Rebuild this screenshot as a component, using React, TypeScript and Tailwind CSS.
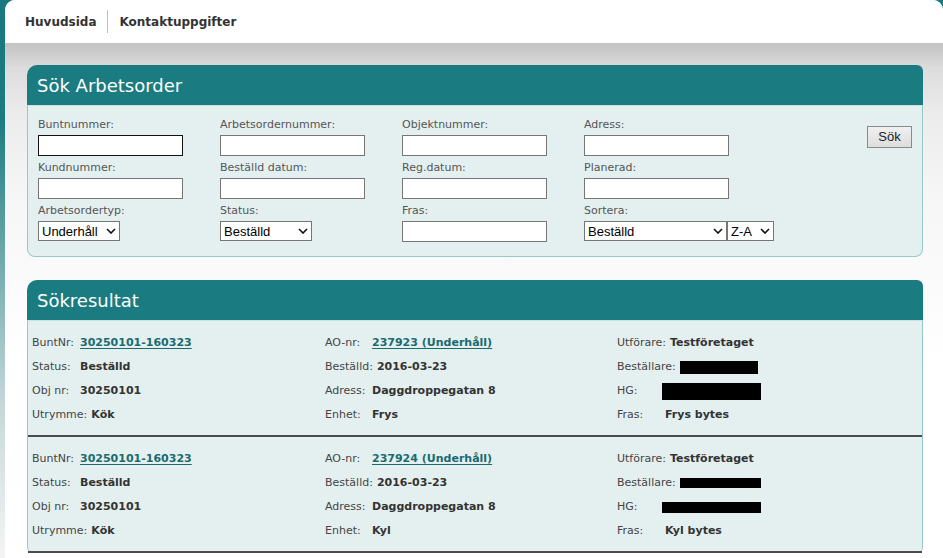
import React from "react";

const Chevron = () => (
  <svg width="10" height="6" viewBox="0 0 10 6" className="shrink-0">
    <path d="M1 1 L5 5 L9 1" fill="none" stroke="#111" strokeWidth="1.6" />
  </svg>
);

function Select({ value, w }: { value: string; w: string }) {
  return (
    <div
      className={`${w} shrink-0 h-[20px] bg-white border border-[#767676] flex items-center justify-between pl-[3px] pr-[3px] text-[13px] text-black`}
      style={{ fontFamily: '"Liberation Sans", Arial, sans-serif' }}
    >
      <span className="leading-none">{value}</span>
      <Chevron />
    </div>
  );
}

function Field({ label, children }: { label: string; children: React.ReactNode }) {
  return (
    <div className="flex flex-col">
      <div className="h-[17px] leading-[14px] text-[11px] text-[#555]">{label}</div>
      {children}
    </div>
  );
}

function Input({ dark }: { dark?: boolean }) {
  return (
    <div
      className={`w-[145px] h-[21px] bg-white border ${dark ? "border-[#111]" : "border-[#767676]"}`}
    />
  );
}

function Row({ label, children, min = "min-w-[44px]" }: { label: string; children: React.ReactNode; min?: string }) {
  return (
    <div className="h-[24px] flex items-center whitespace-nowrap">
      <span className={`inline-block ${min} text-[#444]`}>{label}</span>
      <span className="inline-block w-[4px]" />
      <span className="font-bold text-[#333] flex items-center">{children}</span>
    </div>
  );
}

function Redact({ w, h, ml = "" }: { w: string; h: string; ml?: string }) {
  return <span className={`inline-block bg-black ${w} ${h} ${ml}`} />;
}

type Item = {
  ao: string;
  enhet: string;
  fras: string;
  b: [string, string];
  hg: [string, string];
};

const items: Item[] = [
  { ao: "237923 (Underhåll)", enhet: "Frys", fras: "Frys bytes", b: ["w-[78px]", "h-[13px]"], hg: ["w-[99px]", "h-[17px]"] },
  { ao: "237924 (Underhåll)", enhet: "Kyl", fras: "Kyl bytes", b: ["w-[81px]", "h-[10px]"], hg: ["w-[99px]", "h-[11px]"] },
];

function ResultItem({ it }: { it: Item }) {
  return (
    <div className="pl-[4px] pt-[10px] pb-[8px] border-b-2 border-[#4a4a4a] grid grid-cols-[293px_292px_1fr] text-[11px]">
      <div className="flex flex-col">
        <Row label="BuntNr:">
          <a className="text-[#1a6b70] underline underline-offset-2">30250101-160323</a>
        </Row>
        <Row label="Status:">Beställd</Row>
        <Row label="Obj nr:">30250101</Row>
        <Row label="Utrymme:">Kök</Row>
      </div>
      <div className="flex flex-col">
        <Row label="AO-nr:" min="min-w-[43px]">
          <a className="text-[#1a6b70] underline underline-offset-2">{it.ao}</a>
        </Row>
        <Row label="Beställd:" min="min-w-[43px]">2016-03-23</Row>
        <Row label="Adress:" min="min-w-[43px]">Daggdroppegatan 8</Row>
        <Row label="Enhet:" min="min-w-[43px]">{it.enhet}</Row>
      </div>
      <div className="flex flex-col">
        <Row label="Utförare:">Testföretaget</Row>
        <Row label="Beställare:">
          <Redact w={it.b[0]} h={it.b[1]} />
        </Row>
        <Row label="HG:">
          <Redact w={it.hg[0]} h={it.hg[1]} ml="ml-[-3px]" />
        </Row>
        <Row label="Fras:">{it.fras}</Row>
      </div>
    </div>
  );
}

export default function App() {
  return (
    <div
      className="min-h-screen w-full bg-[linear-gradient(to_bottom,#17797e_0px,#1b7c80_120px,#c4d7d8_400px,#f4f4f4_558px)]"
      style={{ fontFamily: '"DejaVu Sans", Verdana, sans-serif' }}
    >
      <div className="ml-[5px] min-h-screen rounded-tl-[10px] rounded-tr-[10px] overflow-hidden bg-white">
        <div className="h-[43px] bg-white flex items-center pl-[20px] text-[12px] font-bold text-[#333]">
          <span>Huvudsida</span>
          <span className="mx-[11px] w-px h-[23px] bg-[#bdbdbd]" />
          <span>Kontaktuppgifter</span>
        </div>
        <div className="bg-[linear-gradient(to_bottom,#c2c2c2_0px,#dcdcdc_25px,#ececec_70px,#f6f6f6_150px,#ffffff_320px)] pt-[22px] pl-[22px] pr-[20px] pb-[10px]">
          {/* Search panel */}
          <div className="w-[896px]">
            <div className="h-[40px] bg-[#1a7b80] rounded-tl-[10px] rounded-tr-[6px] flex items-center pl-[10px] text-[18px] text-white">
              Sök Arbetsorder
            </div>
            <div className="h-[152px] bg-[#e4f0f0] border border-[#96c8ca] border-t-[#c9e1e1] rounded-b-[8px] pl-[10px] pt-[12px] pr-[10px] flex items-start">
              <div className="grid grid-cols-[182px_182px_182px_182px] content-start gap-y-[5px]">
                <Field label="Buntnummer:"><Input dark /></Field>
                <Field label="Arbetsordernummer:"><Input /></Field>
                <Field label="Objektnummer:"><Input /></Field>
                <Field label="Adress:"><Input /></Field>
                <Field label="Kundnummer:"><Input /></Field>
                <Field label="Beställd datum:"><Input /></Field>
                <Field label="Reg.datum:"><Input /></Field>
                <Field label="Planerad:"><Input /></Field>
                <Field label="Arbetsordertyp:"><Select value="Underhåll" w="w-[82px]" /></Field>
                <Field label="Status:"><Select value="Beställd" w="w-[92px]" /></Field>
                <Field label="Fras:"><Input /></Field>
                <Field label="Sortera:">
                  <div className="flex">
                    <Select value="Beställd" w="w-[143px]" />
                    <Select value="Z-A" w="w-[47px]" />
                  </div>
                </Field>
              </div>
              <div className="ml-auto pt-[8px]">
                <div
                  className="w-[45px] h-[22px] border border-[#8a8a8a] bg-[linear-gradient(to_bottom,#f0f0f0,#dddddd)] flex items-center justify-center text-[13px] text-[#222]"
                  style={{ fontFamily: '"Liberation Sans", Arial, sans-serif' }}
                >
                  Sök
                </div>
              </div>
            </div>
          </div>

          {/* Results panel */}
          <div className="w-[896px] mt-[23px]">
            <div className="h-[40px] bg-[#1a7b80] rounded-tl-[10px] rounded-tr-[6px] flex items-center pl-[10px] text-[18px] text-white">
              Sökresultat
            </div>
            <div className="bg-[#e4f0f0] border-x border-t border-[#96c8ca] border-t-[#c9e1e1] rounded-b-[6px]">
              {items.map((it, i) => (
                <ResultItem key={i} it={it} />
              ))}
            </div>
          </div>
        </div>
      </div>
    </div>
  );
}
